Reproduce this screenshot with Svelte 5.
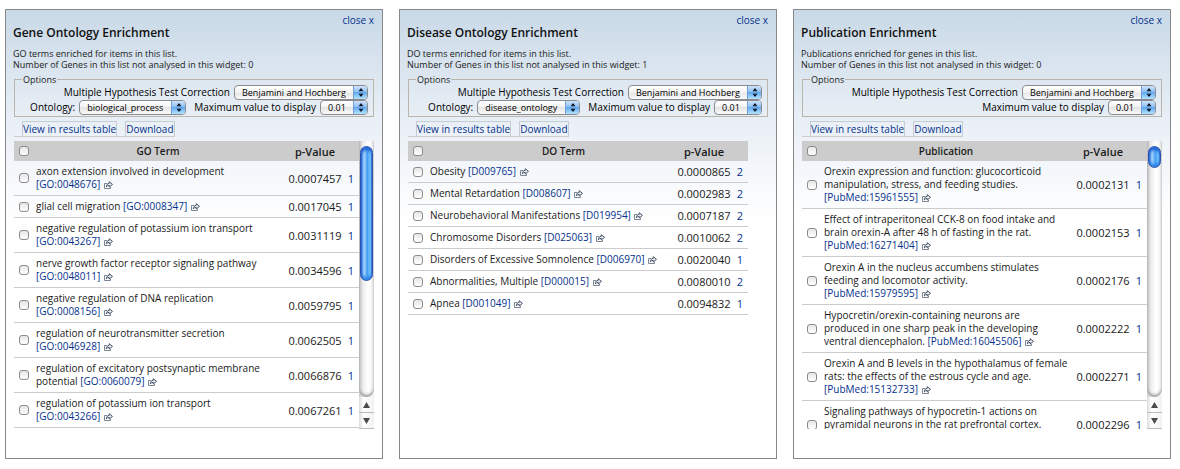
<script>
  const widgets = [
    {
      id: 'go',
      title: 'Gene Ontology Enrichment',
      about: 'GO terms enriched for items in this list.',
      missing: 'Number of Genes in this list not analysed in this widget: 0',
      ontology: 'biological_process',
      column: 'GO Term',
      scroll: 'long',
      rows: [
        ['axon extension involved in development\n', 'GO:0048676', '0.0007457', 1],
        ['glial cell migration ', 'GO:0008347', '0.0017045', 1],
        ['negative regulation of potassium ion transport\n', 'GO:0043267', '0.0031119', 1],
        ['nerve growth factor receptor signaling pathway\n', 'GO:0048011', '0.0034596', 1],
        ['negative regulation of DNA replication\n', 'GO:0008156', '0.0059795', 1],
        ['regulation of neurotransmitter secretion\n', 'GO:0046928', '0.0062505', 1],
        ['regulation of excitatory postsynaptic membrane\npotential ', 'GO:0060079', '0.0066876', 1],
        ['regulation of potassium ion transport\n', 'GO:0043266', '0.0067261', 1]
      ]
    },
    {
      id: 'do',
      title: 'Disease Ontology Enrichment',
      about: 'DO terms enriched for items in this list.',
      missing: 'Number of Genes in this list not analysed in this widget: 1',
      ontology: 'disease_ontology',
      column: 'DO Term',
      scroll: '',
      rows: [
        ['Obesity ', 'D009765', '0.0000865', 2],
        ['Mental Retardation ', 'D008607', '0.0002983', 2],
        ['Neurobehavioral Manifestations ', 'D019954', '0.0007187', 2],
        ['Chromosome Disorders ', 'D025063', '0.0010062', 2],
        ['Disorders of Excessive Somnolence ', 'D006970', '0.0020040', 1],
        ['Abnormalities, Multiple ', 'D000015', '0.0080010', 2],
        ['Apnea ', 'D001049', '0.0094832', 1]
      ]
    },
    {
      id: 'pub',
      title: 'Publication Enrichment',
      about: 'Publications enriched for genes in this list.',
      missing: 'Number of Genes in this list not analysed in this widget: 0',
      ontology: '',
      column: 'Publication',
      scroll: 'short',
      rows: [
        ['Orexin expression and function: glucocorticoid\nmanipulation, stress, and feeding studies.\n', 'PubMed:15961555', '0.0002131', 1],
        ['Effect of intraperitoneal CCK-8 on food intake and\nbrain orexin-A after 48 h of fasting in the rat.\n', 'PubMed:16271404', '0.0002153', 1],
        ['Orexin A in the nucleus accumbens stimulates\nfeeding and locomotor activity.\n', 'PubMed:15979595', '0.0002176', 1],
        ['Hypocretin/orexin-containing neurons are\nproduced in one sharp peak in the developing\nventral diencephalon. ', 'PubMed:16045506', '0.0002222', 1],
        ['Orexin A and B levels in the hypothalamus of female\nrats: the effects of the estrous cycle and age.\n', 'PubMed:15132733', '0.0002271', 1],
        ['Signaling pathways of hypocretin-1 actions on\npyramidal neurons in the rat prefrontal cortex.\n\u00a0', '', '0.0002296', 1]
      ]
    }
  ];
</script>

{#snippet popup(id, value)}
  <span class="popup">
    <select {id}><option>{value}</option></select>
    <span class="cap" aria-hidden="true">
      <svg width="6" height="9" viewBox="0 0 6 9"><path d="M3 0 5.5 3.2H.5zM3 9 .5 5.8h5z" fill="#101c30" /></svg>
    </span>
  </span>
{/snippet}

<main>
  {#each widgets as w (w.id)}
    <section class="widget">
      <a class="close" href="#close-{w.id}">close x</a>
      <h3>{w.title}</h3>
      <p>{w.about}<br />{w.missing}</p>

      <fieldset>
        <legend>Options</legend>
        <div class="line">
          <label for="{w.id}-correction">Multiple Hypothesis Test Correction</label>
          {@render popup(w.id + '-correction', 'Benjamini and Hochberg')}
        </div>
        <div class="line">
          {#if w.ontology}
            <label for="{w.id}-ontology">Ontology:</label>
            {@render popup(w.id + '-ontology', w.ontology)}
          {/if}
          <label class="max" for="{w.id}-max">Maximum value to display</label>
          {@render popup(w.id + '-max', '0.01')}
        </div>
      </fieldset>

      <div class="actions">
        <button type="button">View in results table</button>
        <button type="button">Download</button>
      </div>

      <div class="results" class:plain={!w.scroll}>
        <div class="view">
          <table>
            <thead>
              <tr>
                <th class="tick"><input type="checkbox" aria-label="Select all" /></th>
                <th class="term">{w.column}</th>
                <th class="value">p-Value</th>
                <th class="count"></th>
              </tr>
            </thead>
            <tbody>
              {#each w.rows as [name, ref, p, n] (p)}
                <tr>
                  <td class="tick"><input type="checkbox" aria-label="Select row" /></td>
                  <td class="term">{name}{#if ref}<a href="#{ref}">[{ref}]&nbsp;<svg class="out" width="9" height="8" viewBox="0 0 9 8" aria-hidden="true"><path d="M3 2.5H.5v5h6V6" fill="none" stroke="#7b8594" /><path d="M2.3 5.8C2.4 3.7 3.5 2.5 5.2 2.4V.7L8.5 3.4 5.2 6V4.4C4 4.4 3 4.9 2.3 5.8z" fill="#eef1f5" stroke="#465268" /></svg></a>{/if}</td>
                  <td class="value">{p}</td>
                  <td class="count"><a href="#items-{p}">{n}</a></td>
                </tr>
              {/each}
            </tbody>
          </table>
        </div>
        {#if w.scroll}
          <div class="bar">
            <div class="track"><div class="thumb {w.scroll}"></div></div>
            <button type="button" aria-label="Scroll up"><svg width="7" height="6" viewBox="0 0 7 6"><path d="M3.5 0 7 6H0z" fill="#4a4a4a" /></svg></button>
            <button type="button" aria-label="Scroll down"><svg width="7" height="6" viewBox="0 0 7 6"><path d="M3.5 6 0 0h7z" fill="#4a4a4a" /></svg></button>
          </div>
        {/if}
      </div>
    </section>
  {/each}
</main>

<style>
  :global(body) {
    background: #fff;
  }
  main {
    display: grid;
    grid-template-columns: repeat(3, minmax(0, 1fr));
    gap: 16px;
    padding: 9px 9px 10px 5px;
    font-family: 'Open Sans', 'Noto Sans', sans-serif;
    font-size: 10px;
    line-height: 13px;
    color: #1a1a1a;
  }
  a {
    color: #05318c;
    text-decoration: none;
  }
  .widget {
    display: flex;
    flex-direction: column;
    box-sizing: border-box;
    min-width: 0;
    padding: 4px 8px 29px 7px;
    border: 1px solid #888;
    background: linear-gradient(#c9d9e7, #e9eff6 110px, #fff 210px);
  }
  .close {
    align-self: flex-end;
    line-height: 12px;
  }
  h3 {
    margin: 0;
    font-size: 12px;
    font-weight: 600;
    line-height: 14px;
    color: #111;
  }
  p {
    margin: 8px 0 4px;
    font-size: 9px;
    line-height: 11px;
  }
  fieldset {
    min-width: 0;
    margin: 0 0 0 1px;
    padding: 0 5px 1px;
    border: 1px solid #b9b5ab;
  }
  legend {
    margin-left: 2px;
    padding: 0 1px;
    font-size: 9px;
    line-height: 11px;
  }
  .line {
    display: flex;
    justify-content: flex-end;
    align-items: center;
    gap: 4px;
    height: 15px;
    color: #000;
    white-space: nowrap;
  }
  .popup + .max {
    margin-left: 4px;
  }
  .popup {
    display: flex;
    box-sizing: border-box;
    height: 15px;
    overflow: hidden;
    border: 1px solid #8b8b8f;
    border-radius: 4px;
    background: linear-gradient(#fff, #f2f2f2 50%, #e4e4e4 50%, #fafafa);
  }
  select {
    appearance: none;
    margin: 0;
    padding: 0 7px;
    border: 0;
    background: none;
    font: 9px/13px 'Open Sans', 'Noto Sans', sans-serif;
    color: #000;
  }
  .cap {
    display: flex;
    align-items: center;
    justify-content: center;
    width: 13px;
    border-left: 1px solid #6f9fd6;
    background: linear-gradient(#cfe3fa, #8fc0f2 45%, #63a8ee 50%, #b4e4ff);
    pointer-events: none;
  }
  .actions {
    display: flex;
    align-self: flex-start;
    gap: 8px;
    margin: 4px 0 4px 1px;
    padding-left: 8px;
    border-bottom: 1px solid #ccc;
  }
  .actions button {
    height: 15px;
    padding: 0;
    border: 1px solid #c4ccd4;
    border-bottom: 0;
    background: none;
    font: 10px/13px 'Open Sans', 'Noto Sans', sans-serif;
    color: #05318c;
  }
  .results {
    display: flex;
    height: 288px;
    margin-left: 1px;
  }
  .plain {
    height: auto;
    padding-right: 20px;
  }
  .view {
    flex: 1;
    min-width: 0;
    overflow: hidden;
  }
  table {
    width: 100%;
    table-layout: fixed;
    border-collapse: separate;
    border-spacing: 0;
  }
  th {
    height: 20px;
    padding: 0;
    background: #ccc;
    font-weight: 600;
  }
  td {
    padding: 4px 0;
    border-bottom: 1px solid #ccc;
  }
  .tick {
    width: 19px;
  }
  td.term {
    padding-left: 3px;
    white-space: pre-line;
  }
  .plain th.term {
    padding-left: 28px;
  }
  .value {
    width: 64px;
    text-align: center;
    font-size: 11px;
  }
  .count {
    width: 8px;
    padding-right: 4px;
    font-size: 11px;
    text-align: center;
  }
  input {
    appearance: none;
    display: block;
    box-sizing: border-box;
    width: 10px;
    height: 10px;
    margin: 0 0 0 5px;
    border: 1px solid #8c8c8c;
    border-radius: 3px;
    background: linear-gradient(#e6e6e6, #fff);
  }
  .out {
    margin-left: 1px;
    vertical-align: -1px;
  }
  .bar {
    display: flex;
    flex-direction: column;
    width: 15px;
    background: linear-gradient(90deg, #c9c9c9, #efefef 30%, #fff 60%, #f0f0f0);
  }
  .track {
    flex: 1;
    padding: 5px 1px 0;
    border-radius: 0 0 8px 8px;
    box-shadow: inset 0 -2px 3px #999;
  }
  .thumb {
    box-sizing: border-box;
    border: 1px solid #2b4fae;
    border-radius: 7px;
    background: linear-gradient(90deg, #2566d8, #a9d6fb 25%, #6bb4f7 48%, #3d97f2 55%, #86d2ff 88%, #3a6fb4);
    box-shadow: inset 0 3px 3px #1d5fd0, inset 0 -3px 3px #2f86e8;
  }
  .long {
    height: 135px;
  }
  .short {
    height: 22px;
  }
  .bar button {
    display: flex;
    align-items: center;
    justify-content: center;
    height: 16px;
    padding: 0;
    border: 0;
    border-bottom: 1px solid #bbb;
    background: linear-gradient(90deg, #ddd, #fff 30%, #f2f2f2);
  }
</style>
